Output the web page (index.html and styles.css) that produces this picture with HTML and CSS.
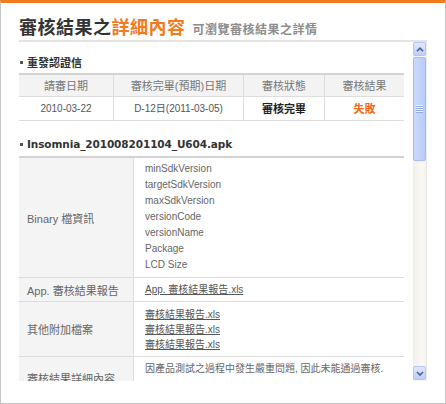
FILE: index.html
```html
<!DOCTYPE html>
<html lang="zh-Hant">
<head>
<meta charset="utf-8">
<title>審核結果之詳細內容</title>
<link rel="stylesheet" href="styles.css">
</head>
<body>
<div class="frame">
  <div class="title">
    <span class="t-main">審核結果之</span><span class="t-accent">詳細內容</span><span class="t-sub">可瀏覽審核結果之詳情</span>
  </div>
  <div class="body">
    <div class="content">
      <h2 class="sec sec-first">重發認證信</h2>
      <table class="t1">
        <colgroup><col class="c1"><col class="c2"><col class="c3"><col class="c4"></colgroup>
        <thead>
          <tr><th>請審日期</th><th>審核完畢(預期)日期</th><th>審核狀態</th><th class="last">審核結果</th></tr>
        </thead>
        <tbody>
          <tr><td class="num">2010-03-22</td><td class="num">D-12日(2011-03-05)</td><td class="done">審核完畢</td><td class="last fail">失敗</td></tr>
        </tbody>
      </table>
      <h2 class="sec sec-apk">Insomnia_201008201104_U604.apk</h2>
      <table class="t2">
        <colgroup><col class="lab"><col class="val"></colgroup>
        <tbody>
          <tr class="r1">
            <th>Binary 檔資訊</th>
            <td>minSdkVersion<br>targetSdkVersion<br>maxSdkVersion<br>versionCode<br>versionName<br>Package<br>LCD Size</td>
          </tr>
          <tr class="r2">
            <th>App. 審核結果報告</th>
            <td><a href="#">App. 審核結果報告.xls</a></td>
          </tr>
          <tr class="r3">
            <th>其他附加檔案</th>
            <td><a href="#">審核結果報告.xls</a><br><a href="#">審核結果報告.xls</a><br><a href="#">審核結果報告.xls</a></td>
          </tr>
          <tr class="r4">
            <th>審核結果詳細內容</th>
            <td>因產品測試之過程中發生嚴重問題, 因此未能通過審核.</td>
          </tr>
        </tbody>
      </table>
    </div>
    <div class="scrollbar">
      <div class="sb-btn">
        <svg width="8" height="5" viewBox="0 0 8 5"><polyline points="1,4.2 4,1.2 7,4.2" fill="none" stroke="#4a5f86" stroke-width="1.6"/></svg>
      </div>
      <div class="sb-thumb">
        <svg width="7" height="8" viewBox="0 0 7 8">
          <rect x="0" y="0" width="7" height="1" fill="#eef3ff"/><rect x="0" y="1" width="7" height="1" fill="#8fa8e6"/>
          <rect x="0" y="2" width="7" height="1" fill="#eef3ff"/><rect x="0" y="3" width="7" height="1" fill="#8fa8e6"/>
          <rect x="0" y="4" width="7" height="1" fill="#eef3ff"/><rect x="0" y="5" width="7" height="1" fill="#8fa8e6"/>
          <rect x="0" y="6" width="7" height="1" fill="#eef3ff"/><rect x="0" y="7" width="7" height="1" fill="#8fa8e6"/>
        </svg>
      </div>
      <div class="sb-track"></div>
      <div class="sb-btn">
        <svg width="8" height="5" viewBox="0 0 8 5"><polyline points="1,1 4,4 7,1" fill="none" stroke="#4a5f86" stroke-width="1.6"/></svg>
      </div>
    </div>
  </div>
</div>
</body>
</html>
```

FILE: styles.css
```css
* { box-sizing: border-box; }

html, body {
  margin: 0;
  padding: 0;
  background: #ffffff;
}

body {
  font-family: "Liberation Sans", "Noto Sans CJK TC", sans-serif;
  color: #666;
}

.frame {
  width: 446px;
  height: 404px;
  border: 1px solid #c4c4c4;
  border-top: 3px solid #f07c1e;
  padding: 0 18px;
  display: flex;
  flex-direction: column;
}

.title {
  height: 39px;
  border-bottom: 2px solid #e4e4e4;
  padding-top: 11px;
  line-height: 24px;
  white-space: nowrap;
  display: flex;
  align-items: baseline;
  font-family: "Noto Sans CJK TC", sans-serif;
}

.t-main, .t-accent {
  font-size: 18px;
  font-weight: bold;
  letter-spacing: 0.5px;
}

.t-main { color: #333; }
.t-accent { color: #f47a20; }

.t-sub {
  margin-left: 7px;
  font-size: 12px;
  font-weight: bold;
  color: #8c8c8c;
  letter-spacing: 0.5px;
}

.body {
  display: flex;
  gap: 9px;
  height: 339px;
}

.content {
  width: 385px;
  overflow: hidden;
  flex: none;
}

.sec {
  position: relative;
  margin: 0;
  padding-left: 8px;
  line-height: 16px;
  font-size: 11px;
  font-weight: bold;
  color: #333;
}

.sec::before {
  content: "";
  position: absolute;
  left: 1px;
  width: 3px;
  height: 3px;
  background: #555;
}

.sec-first {
  padding-top: 12px;
  margin-bottom: 3px;
  font-family: "Noto Sans CJK TC", sans-serif;
}
.sec-first::before { top: 19px; }

.sec-apk {
  padding-top: 15px;
  margin-bottom: 4px;
  font-family: "DejaVu Sans", sans-serif;
  font-size: 10.5px;
  letter-spacing: -0.1px;
}
.sec-apk::before { top: 22px; }

table {
  width: 385px;
  table-layout: fixed;
  border-collapse: separate;
  border-spacing: 0;
  border-top: 2px solid #d3d3d3;
}

th, td {
  font-size: 11px;
  font-weight: normal;
  color: #666;
  border-bottom: 1px solid #dddddd;
  border-right: 1px solid #dddddd;
}

.last { border-right: none; }

.t1 .c1 { width: 95px; }
.t1 .c2 { width: 130px; }
.t1 .c3 { width: 81px; }
.t1 .c4 { width: 79px; }

.t1 th {
  background: #f3f3f3;
  color: #777;
  text-align: center;
  padding: 3px 0 2px;
  line-height: 16px;
}

.t1 td {
  text-align: center;
  padding: 4px 0;
  line-height: 15px;
}

.t1 .num {
  font-size: 10px;
  color: #555;
}

.t1 .done {
  font-weight: bold;
  color: #222;
  font-family: "Noto Sans CJK TC", sans-serif;
}

.t1 .fail {
  font-weight: bold;
  color: #f26a1a;
  font-family: "Noto Sans CJK TC", sans-serif;
}

.t2 .lab { width: 115px; }
.t2 .val { width: 270px; }

.t2 th {
  background: #f4f4f4;
  text-align: left;
  padding: 0 0 0 8px;
  vertical-align: middle;
}

.t2 td {
  border-right: none;
  font-size: 10px;
  padding-left: 11px;
  vertical-align: top;
}

.t2 .r1 td { padding-top: 3px; padding-bottom: 4px; line-height: 16px; }
.t2 .r2 td { padding-top: 4px; padding-bottom: 4px; line-height: 15px; }
.t2 .r3 td { padding-top: 5px; padding-bottom: 4px; line-height: 15px; }
.t2 .r4 td { padding-top: 4px; padding-bottom: 22px; line-height: 16px; }

.t2 a {
  color: #555;
  text-decoration: underline;
}

.scrollbar {
  width: 14px;
  flex: none;
  display: flex;
  flex-direction: column;
  background: linear-gradient(to right, #efeee6, #fbfaf5 70%, #f3f2ec);
  border-right: 1px solid #ecebe4;
  padding-bottom: 1px;
}

.sb-btn {
  width: 13px;
  height: 14px;
  flex: none;
  display: flex;
  align-items: center;
  justify-content: center;
  background: linear-gradient(#dfe8fe, #bccdfa);
  border: 1px solid #b3c5f2;
  border-radius: 2px;
}

.sb-thumb {
  width: 13px;
  height: 104px;
  flex: none;
  margin-top: 1px;
  display: flex;
  align-items: center;
  justify-content: center;
  background: linear-gradient(to right, #cbd9fd, #b8cbf9);
  border: 1px solid #a7bcf2;
  border-radius: 2px;
}

.sb-track { flex: 1; }
```
